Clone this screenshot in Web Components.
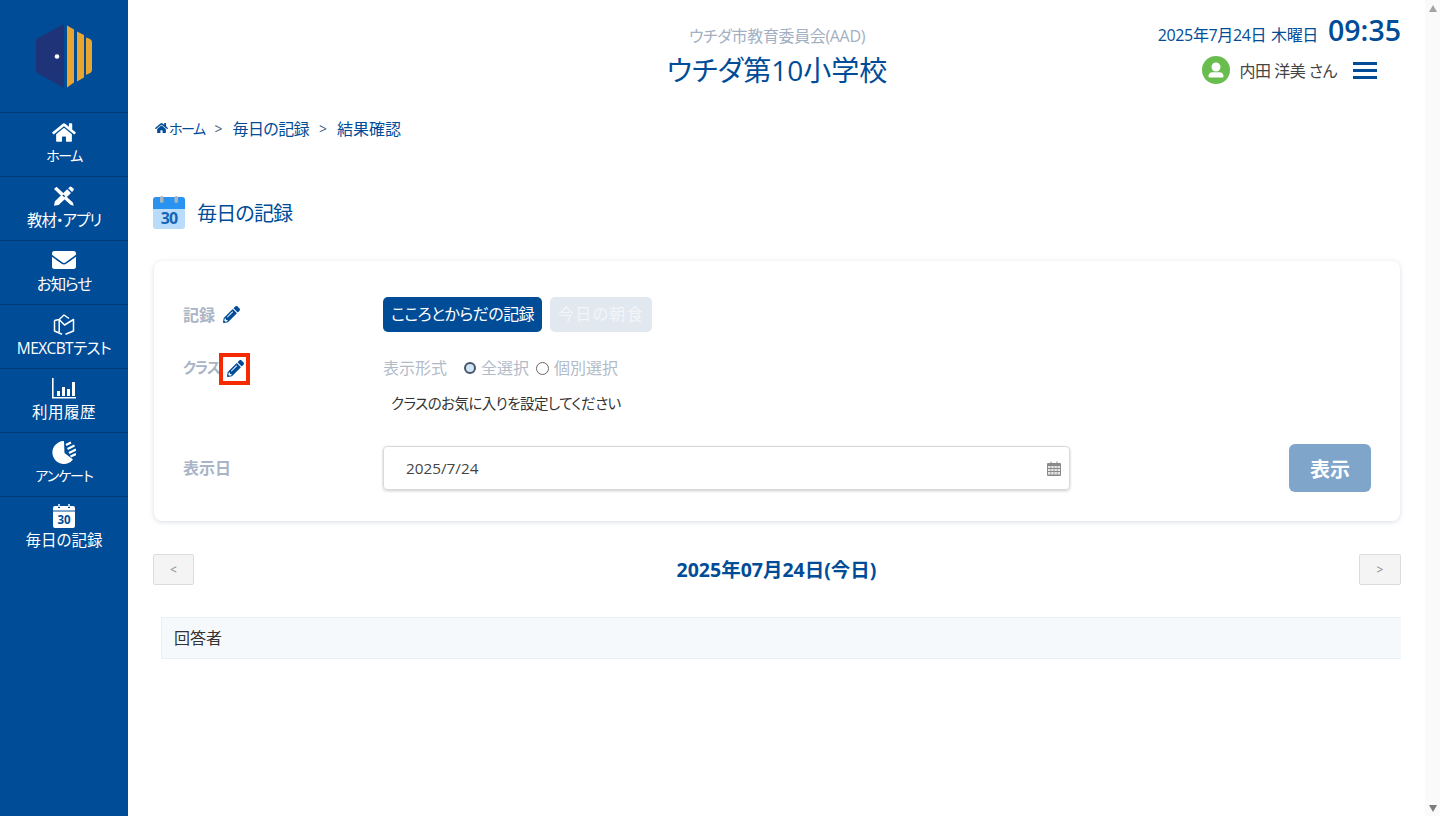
<!DOCTYPE html>
<html lang="ja">
<head>
<meta charset="utf-8">
<title>毎日の記録</title>
<style>
  html, body { margin: 0; height: 100%; overflow: hidden; background: #fff; }
  body { font-family: "Open Sans", "Noto Sans CJK JP", sans-serif; font-size: 16px; color: #333; font-feature-settings: "palt"; }
</style>
</head>
<body>
<app-shell>
  <side-bar slot="side">
    <side-item label="ホーム" icon="home" style="--ls:-1.500px;--fs:14px"></side-item>
    <side-item label="教材・アプリ" icon="tools" style="--ls:-1px"></side-item>
    <side-item label="お知らせ" icon="mail" style="--ls:-1px"></side-item>
    <side-item label="MEXCBTテスト" icon="cube" style="--ls:-.6px"></side-item>
    <side-item label="利用履歴" icon="chart" style="--ls:.5px"></side-item>
    <side-item label="アンケート" icon="pie" style="--ls:-1px;--fs:14px"></side-item>
    <side-item label="毎日の記録" icon="cal"></side-item>
  </side-bar>
  <top-header></top-header>
  <bread-crumbs></bread-crumbs>
  <page-title>毎日の記録</page-title>
  <record-card></record-card>
  <day-nav>2025年07月24日(今日)</day-nav>
  <answer-head>回答者</answer-head>
</app-shell>

<script>
const ICONS = {
  home: `<svg width="24" height="21" viewBox="0 0 576 512" fill="#fff"><path d="M280.37 148.26L96 300.11V464a16 16 0 0 0 16 16l112.06-.29a16 16 0 0 0 15.92-16V368a16 16 0 0 1 16-16h64a16 16 0 0 1 16 16v95.64a16 16 0 0 0 16 16.05L464 480a16 16 0 0 0 16-16V300L295.67 148.26a12.19 12.19 0 0 0-15.3 0zM571.6 251.47L488 182.56V44.05a12 12 0 0 0-12-12h-56a12 12 0 0 0-12 12v72.61L318.47 43a48 48 0 0 0-61 0L4.34 251.47a12 12 0 0 0-1.6 16.9l25.5 31A12 12 0 0 0 45.15 301l235.22-193.74a12.19 12.19 0 0 1 15.3 0L530.9 301a12 12 0 0 0 16.9-1.6l25.5-31a12 12 0 0 0-1.7-16.93z"/></svg>`,
  tools: `<svg width="22" height="20" viewBox="0 0 22 20" fill="#fff"><path d="M1 3 3.500.8 11 7.800 8.600 10.200zM12.600 9.800l7.200 6.700 1 3.200-3.300-.9-7.200-6.600z"/><path d="M16.600.9a1.400 1.400 0 0 1 2 0l1.800 1.700a1.400 1.400 0 0 1 0 2l-1.400 1.400-3.800-3.700zM14.200 3.300 18 7l-4.600 4.500-3.800-3.700zM8.700 8.700l3.800 3.700-6.900 6.500L1 19.800l.9-4.500z"/></svg>`,
  mail: `<svg width="24" height="18" viewBox="0 64 512 384" preserveAspectRatio="none" fill="#fff"><path d="M502.300 190.800c3.900-3.100 9.700-.2 9.700 4.700V400c0 26.500-21.500 48-48 48H48c-26.500 0-48-21.500-48-48V195.600c0-5 5.700-7.800 9.700-4.700 22.400 17.400 52.100 39.500 154.100 113.600 21.100 15.400 56.700 47.800 92.200 47.600 35.700.3 72-32.800 92.300-47.600 102-74.100 131.600-96.300 154-113.700zM256 320c23.200.4 56.600-29.200 73.400-41.400 132.700-96.300 142.800-104.700 173.400-128.700 5.800-4.500 9.200-11.500 9.200-18.900v-19c0-26.500-21.500-48-48-48H48C21.500 64 0 85.500 0 112v19c0 7.400 3.400 14.300 9.200 18.900 30.600 23.900 40.700 32.400 173.400 128.700 16.800 12.200 50.200 41.800 73.400 41.400z"/></svg>`,
  cube: `<svg width="22" height="21" viewBox="0 0 22 21" fill="none" stroke="#fff" stroke-width="1.500" stroke-linejoin="round"><path d="M6.200 5.500 11 1 16 4.500M1.500 6.500V17L9 20.300M1.500 6.500 6.200 5.500V18M6.200 5.500 11.500 11 20.500 5.500V17L12.500 20.300"/></svg>`,
  chart: `<svg width="24" height="21" viewBox="0 0 24 21" fill="#fff"><path d="M0 0h1.600v19H24v1.600H0z"/><rect x="5" y="13" width="3" height="5"/><rect x="10" y="9" width="3" height="9"/><rect x="15" y="11" width="3" height="7"/><rect x="20" y="4" width="3" height="14"/></svg>`,
  pie: `<svg width="24" height="23" viewBox="0 0 24 23" fill="#fff"><path d="M12 0A11.500 11.500 0 1 0 21 18.500L12.500 12z"/><path stroke="#fff" stroke-width="2.200" d="M14 4 19 1.500M15.500 8 22.500 4.500M17 12 24 8.500M18.500 15.500 24 13"/></svg>`,
  cal: `<svg width="22" height="24" viewBox="0 0 22 24"><path fill="#fff" d="M2 2h3v2h2V2h8v2h2V2h3a2 2 0 0 1 2 2v18a2 2 0 0 1-2 2H2a2 2 0 0 1-2-2V4a2 2 0 0 1 2-2z"/><path stroke="#fff" stroke-width="1.500" d="M6 0v3M16 0v3"/><path stroke="#004c97" d="M0 7h22"/><text x="11" y="20" text-anchor="middle" font-family="Open Sans" font-weight="700" font-size="11.500" fill="#004c97">30</text></svg>`
};
const PENCIL = `<svg width="17" height="17" viewBox="0 0 512 512" fill="#004c97"><path d="M497.900 142.100l-46.100 46.100c-4.700 4.700-12.300 4.700-17 0l-111-111c-4.700-4.700-4.700-12.300 0-17l46.100-46.100c18.700-18.700 49.100-18.700 67.900 0l60.100 60.100c18.800 18.700 18.800 49.100 0 67.900zM284.200 99.800L21.600 362.400.4 483.900c-2.900 16.400 11.400 30.600 27.800 27.800l121.500-21.300 262.600-262.600c4.700-4.700 4.700-12.300 0-17l-111-111c-4.800-4.700-12.400-4.700-17.100 0zM124.100 339.900c-5.500-5.500-5.500-14.300 0-19.800l154-154c5.500-5.500 14.300-5.500 19.800 0s5.500 14.300 0 19.800l-154 154c-5.500 5.500-14.300 5.500-19.800 0zM88 424h48v36.300l-64.500 11.300-31.100-31.100L51.700 376H88v48z"/></svg>`;

// shared helper, most elements only need a style + markup
function simple(tag, html) {
  customElements.define(tag, class extends HTMLElement {
    constructor() {
      super();
      this.attachShadow({ mode: "open" });
    }
    connectedCallback() {
      this.shadowRoot.innerHTML = html;
    }
  });
}

simple("app-shell", `
  <style>
    :host { display: flex; height: 816px; }
    main { flex: 1; min-width: 0; padding: 0 24px 0 25px; }
    .bar { width: 15px; background: #fafafa; display: flex; flex-direction: column; justify-content: space-between; align-items: center; padding: 5px 0 4px; box-sizing: border-box; }
    .up, .down { width: 0; height: 0; border-left: 4.500px solid transparent; border-right: 4.500px solid transparent; }
    .up { border-bottom: 7px solid #a3a3a3; }
    .down { border-top: 7px solid #7c7c7c; }
  </style>
  <slot name="side"></slot>
  <main><slot></slot></main>
  <div class="bar"><span class="up"></span><span class="down"></span></div>
`);

simple("side-bar", `
  <style>
    :host { display: block; width: 128px; flex: none; background: #004c97; }
    .logo { height: 112px; display: flex; align-items: center; justify-content: center; }
    svg { display: block; margin-top: -1px; }
  </style>
  <div class="logo">
    <svg width="56" height="64" viewBox="36 23.500 56 64">
      <path fill="#1f3478" d="M64 23.500V87.500L38 73Q36 72 36 70V40.500Q36 38.500 38 37.500z"/>
      <circle cx="57" cy="56" r="2.300" fill="#fff"/>
      <path fill="#e8a530" d="M67 25l7 4V82l-7 5zM77 31l7 3.500V77l-7 4zM86 37l3 1Q92 39 92 42V69Q92 72 89 73l-3 1.500z"/>
    </svg>
  </div>
  <slot></slot>
`);

customElements.define("side-item", class extends HTMLElement {
  constructor() {
    super();
    this.attachShadow({ mode: "open" });
  }
  connectedCallback() {
    const label = this.getAttribute("label");
    const icon = ICONS[this.getAttribute("icon")];
    this.shadowRoot.innerHTML = `
      <style>
        :host { display: block; height: 64px; box-sizing: border-box; border-top: 1px solid #003b75; color: #fff; }
        .i { height: 24px; margin-top: 7px; display: flex; justify-content: center; align-items: center; }
        .t { text-align: center; font-size: var(--fs, 15.500px); line-height: 20px; margin-top: 2px; white-space: nowrap; letter-spacing: var(--ls, 0); }
      </style>
      <div class="i">${icon}</div>
      <div class="t">${label}</div>
    `;
  }
});

simple("top-header", `
  <style>
    :host { display: block; position: relative; height: 111px; color: #004c97; }
    .center { text-align: center; padding-top: 26px; }
    .org { font-size: 16px; line-height: 20px; color: #a3afc2; letter-spacing: -.35px; }
    .school { font-size: 28px; line-height: 40px; margin-top: 4px; }
    .right { position: absolute; right: 0; top: 12px; text-align: right; }
    .when { display: flex; justify-content: flex-end; align-items: baseline; gap: 10px; white-space: nowrap; }
    .date { font-size: 16px; letter-spacing: -.35px; word-spacing: 1px; }
    .time { font-size: 28.500px; font-weight: 600; line-height: 38px; margin-top: -1px; }
    .user { display: flex; justify-content: flex-end; align-items: center; margin-top: 7px; padding-right: 24px; color: #444; }
    .name { margin: 0 16px 0 9px; font-size: 16px; letter-spacing: -.5px; }
    .ham { width: 24px; height: 17px; border-top: 3px solid #004c97; border-bottom: 3px solid #004c97; position: relative; box-sizing: border-box; }
    .ham::after { content: ""; position: absolute; left: 0; right: 0; top: 4px; height: 3px; background: #004c97; }
    svg { display: block; }
  </style>
  <div class="center">
    <div class="org">ウチダ市教育委員会(AAD)</div>
    <div class="school">ウチダ第10小学校</div>
  </div>
  <div class="right">
    <div class="when"><span class="date">2025年7月24日 木曜日</span><span class="time">09:35</span></div>
    <div class="user">
      <svg width="28" height="28" viewBox="0 0 28 28"><circle cx="14" cy="14" r="14" fill="#69bd4f"/><circle cx="14" cy="11" r="4.500" fill="#fff"/><path fill="#fff" d="M6.500 20a4 4 0 0 1 4-3.800h7a4 4 0 0 1 4 3.800v.5q0 1-1 1h-13q-1 0-1-1z"/></svg>
      <span class="name">内田 洋美 さん</span>
      <span class="ham"></span>
    </div>
  </div>
`);

simple("bread-crumbs", `
  <style>
    :host { display: flex; align-items: center; height: 34px; color: #004c97; font-size: 16px; white-space: nowrap; }
    .sep { margin: 0 10px; font-size: 14px; color: #3f5f88; }
    .home { font-size: 14px; letter-spacing: -1.500px; }
    .mid { letter-spacing: -.6px; }
    svg { margin: 0 1px 0 2px; }
  </style>
  <svg width="13" height="12" viewBox="0 0 576 512" fill="#004c97"><path d="M280.37 148.26L96 300.11V464a16 16 0 0 0 16 16l112.06-.29a16 16 0 0 0 15.92-16V368a16 16 0 0 1 16-16h64a16 16 0 0 1 16 16v95.64a16 16 0 0 0 16 16.05L464 480a16 16 0 0 0 16-16V300L295.67 148.26a12.19 12.19 0 0 0-15.3 0zM571.6 251.47L488 182.56V44.05a12 12 0 0 0-12-12h-56a12 12 0 0 0-12 12v72.61L318.47 43a48 48 0 0 0-61 0L4.34 251.47a12 12 0 0 0-1.6 16.9l25.5 31A12 12 0 0 0 45.15 301l235.22-193.74a12.19 12.19 0 0 1 15.3 0L530.9 301a12 12 0 0 0 16.9-1.6l25.5-31a12 12 0 0 0-1.7-16.93z"/></svg>
  <span class="home">ホーム</span><span class="sep">&gt;</span><span class="mid">毎日の記録</span><span class="sep">&gt;</span><span>結果確認</span>
`);

simple("page-title", `
  <style>
    :host { display: flex; align-items: center; gap: 12px; margin-top: 50px; height: 34px; color: #004c97; font-size: 20px; letter-spacing: -.8px; }
    svg { display: block; }
  </style>
  <svg width="32" height="33" viewBox="0 0 32 33">
    <rect y="1" width="32" height="32" rx="3" fill="#b9dcfb"/>
    <path fill="#2a93f0" d="M3 1h26a3 3 0 0 1 3 3v9H0V4a3 3 0 0 1 3-3z"/>
    <rect x="7" y="0" width="3.500" height="7" rx="1.700" fill="#a9b4be"/>
    <rect x="21.500" y="0" width="3.500" height="7" rx="1.700" fill="#a9b4be"/>
    <text x="16" y="28" text-anchor="middle" font-family="Open Sans" font-weight="700" font-size="16" fill="#1565b8">30</text>
  </svg>
  <span><slot></slot></span>
`);

simple("record-card", `
  <style>
    :host { display: block; position: relative; margin: 32px 1px 0 1px; height: 260px; box-sizing: border-box; padding: 36px 29px 0; background: #fff; border-radius: 8px; box-shadow: 0 1px 5px rgba(70, 100, 140, .22); }
    .row { display: grid; grid-template-columns: 200px 1fr; align-items: center; }
    .lab { font-weight: 700; font-size: 16px; line-height: 20px; color: #a9b5c6; display: flex; align-items: center; gap: 8px; }
    .lab.kana { font-size: 14.500px; letter-spacing: -1px; }
    svg { display: block; }
    .btns { display: flex; gap: 8px; }
    .btn { width: 159px; height: 35px; line-height: 35px; text-align: center; border-radius: 5px; font-size: 16px; letter-spacing: -.6px; color: #fff; background: #004c97; white-space: nowrap; }
    .btn.off { width: 102px; letter-spacing: 1.300px; background: #e2e8f0; color: #f3f5f8; }
    .mode { display: flex; align-items: center; color: #b2bbc8; font-size: 16px; line-height: 20px; gap: 5px; white-space: nowrap; }
    .mode b { font-weight: 400; margin-right: 7px; }
    .radio { width: 11px; height: 11px; border: 1px solid #666; border-radius: 50%; background: #fff; margin-left: 2px; }
    .radio.on { background: #cfe6f7; border: 2px solid #46556a; width: 8px; height: 8px; margin-left: 5px; }
    .msg { margin: 16px 0 0 8px; font-size: 14.500px; letter-spacing: -.55px; line-height: 20px; color: #333; }
    .date-row { grid-template-columns: 200px 687px 1fr; margin-top: 30px; }
    .input { height: 44px; box-sizing: border-box; border: 1px solid #d9d9d9; border-radius: 4px; box-shadow: 0 1px 3px rgba(0,0,0,.2); display: flex; align-items: center; justify-content: space-between; padding: 0 8px 0 22px; color: #444; font-size: 15.300px; }
    .go { justify-self: end; width: 82px; height: 48px; border-radius: 6px; background: #7fa5cb; color: #fff; font-weight: 700; font-size: 20px; display: flex; align-items: center; justify-content: center; }
    .mark { position: absolute; left: 65px; top: 92px; width: 31px; height: 32px; box-sizing: border-box; border: 4px solid #f62a00; }
    .pen2 { position: absolute; left: 73px; top: 99px; }
  </style>
  <div class="row" style="height:35px">
    <div class="lab">記録 ${PENCIL}</div>
    <div class="btns"><span class="btn">こころとからだの記録</span><span class="btn off">今日の朝食</span></div>
  </div>
  <div class="row" style="margin-top:26px;height:20px">
    <div class="lab kana">クラス</div>
    <div class="mode"><b>表示形式</b><span class="radio on"></span><span>全選択</span><span class="radio"></span><span>個別選択</span></div>
  </div>
  <div class="pen2">${PENCIL}</div>
  <div class="mark"></div>
  <div class="row">
    <div></div>
    <div class="msg">クラスのお気に入りを設定してください</div>
  </div>
  <div class="row date-row">
    <div class="lab">表示日</div>
    <div class="input"><span>2025/7/24</span>
      <svg width="14" height="15" viewBox="0 0 14 15"><path fill="#8a8a8a" d="M1 2h2.500V.5h1V2h5V.5h1V2H13a1 1 0 0 1 1 1v11a1 1 0 0 1-1 1H1a1 1 0 0 1-1-1V3a1 1 0 0 1 1-1z"/><path fill="#e6e6e6" d="M1 5h2.500v2H1zM4.200 5h2.500v2H4.200zM7.400 5h2.500v2H7.400zM10.500 5H13v2h-2.500zM1 8h2.500v2H1zM4.200 8h2.500v2H4.200zM7.400 8h2.500v2H7.400zM10.500 8H13v2h-2.500zM1 11h2.500v2.500H1zM4.200 11h2.500v2.500H4.200zM7.400 11h2.500v2.500H7.400zM10.500 11H13v2.500h-2.500z"/></svg>
    </div>
    <div class="go">表示</div>
  </div>
`);

simple("day-nav", `
  <style>
    :host { display: flex; align-items: center; justify-content: space-between; margin-top: 33px; height: 31px; }
    .b { width: 41px; height: 31px; box-sizing: border-box; border: 1px solid #dcdcdc; border-radius: 2px; background: #f4f4f4; color: #888; font-size: 12px; display: flex; align-items: center; justify-content: center; }
    .b:last-child { width: 42px; }
    .t { font-size: 19.500px; line-height: 28px; font-weight: 700; color: #004c97; }
  </style>
  <span class="b">&lt;</span><span class="t"><slot></slot></span><span class="b">&gt;</span>
`);

simple("answer-head", `
  <style>
    :host { display: flex; align-items: center; margin: 32px 0 0 8px; height: 42px; box-sizing: border-box; padding: 0 0 2px 12px; background: #f5f9fc; border: 1px solid #e9eff4; border-right: 0; font-size: 16px; color: #333; }
  </style>
  <slot></slot>
`);
</script>
</body>
</html>
